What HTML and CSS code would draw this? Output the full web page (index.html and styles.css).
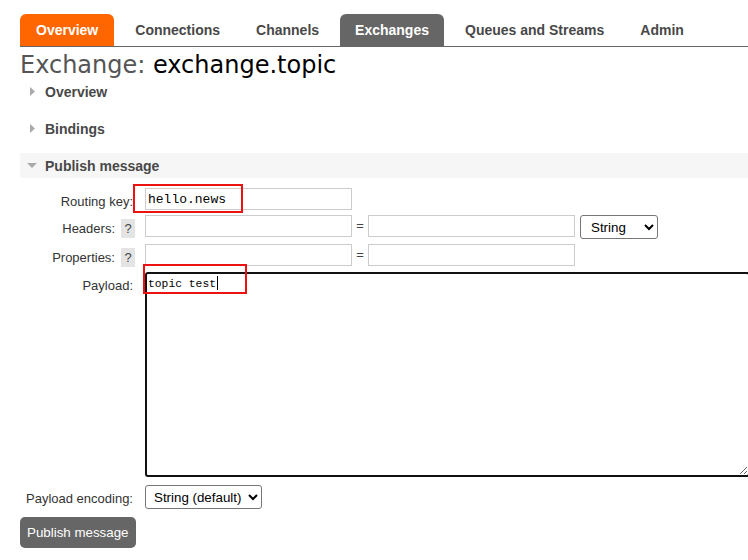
FILE: index.html
```html
<!DOCTYPE html>
<html lang="en">
<head>
<meta charset="utf-8">
<title>Exchange: exchange.topic</title>
<link rel="stylesheet" href="styles.css">
</head>
<body>
<div class="page">
  <nav class="tabs">
    <a class="tab tab-home">Overview</a>
    <a class="tab">Connections</a>
    <a class="tab">Channels</a>
    <a class="tab tab-current">Exchanges</a>
    <a class="tab">Queues and Streams</a>
    <a class="tab">Admin</a>
  </nav>

  <h1 class="title"><span class="title-kind">Exchange:</span> exchange.topic</h1>

  <div class="section">
    <span class="section-icon"><svg width="5" height="9" viewBox="0 0 5 9"><polygon points="0,0 5,4.5 0,9" fill="#aaa"/></svg></span>
    <span>Overview</span>
  </div>
  <div class="section">
    <span class="section-icon"><svg width="5" height="9" viewBox="0 0 5 9"><polygon points="0,0 5,4.5 0,9" fill="#aaa"/></svg></span>
    <span>Bindings</span>
  </div>
  <div class="section section-open">
    <span class="section-icon"><svg width="10" height="5" viewBox="0 0 10 5"><polygon points="0,0 10,0 5,5" fill="#aaa"/></svg></span>
    <span>Publish message</span>
  </div>

  <form class="publish">
    <div class="label"><span class="label-text">Routing key:</span></div>
    <div class="field">
      <div class="mark-wrap">
        <input class="text-input" type="text" value="hello.news">
        <span class="mark mark-key"></span>
      </div>
    </div>

    <div class="label"><span class="label-text">Headers:</span><span class="help">?</span></div>
    <div class="field">
      <input class="text-input" type="text">
      <span class="eq">=</span>
      <input class="text-input" type="text">
      <select class="select select-type"><option>String</option></select>
    </div>

    <div class="label"><span class="label-text">Properties:</span><span class="help">?</span></div>
    <div class="field">
      <input class="text-input" type="text">
      <span class="eq">=</span>
      <input class="text-input" type="text">
    </div>

    <div class="label"><span class="label-text">Payload:</span></div>
    <div class="field">
      <div class="mark-wrap">
        <textarea class="payload">topic test</textarea>
        <span class="caret"></span>
        <span class="mark mark-payload"></span>
      </div>
    </div>

    <div class="label label-enc"><span class="label-text">Payload encoding:</span></div>
    <div class="field field-enc">
      <select class="select select-enc"><option>String (default)</option></select>
    </div>
  </form>

  <div class="actions">
    <button class="btn" type="button">Publish message</button>
  </div>
</div>
</body>
</html>
```

FILE: styles.css
```css
html, body {
  margin: 0;
  padding: 0;
  overflow: hidden;
  background: #fff;
}

body {
  font-family: "Liberation Sans", Arial, sans-serif;
  font-size: 13px;
  color: #484848;
}

.page {
  padding-left: 20px;
}

/* Tabs */
.tabs {
  display: flex;
  gap: 6px;
  margin-top: 14px;
  border-bottom: 1px solid #666;
}

.tab {
  display: block;
  height: 32px;
  line-height: 32px;
  padding: 0 15px;
  font-size: 14px;
  font-weight: bold;
  color: #484848;
  border-radius: 6px 6px 0 0;
  text-decoration: none;
}

.tab-home {
  background: #f60;
  color: #fff;
  padding: 0 16px;
}

.tab-current {
  background: #666;
  color: #fff;
}

/* Title */
.title {
  margin: 4px 0 0;
  font-family: "DejaVu Sans", Verdana, sans-serif;
  font-size: 24px;
  font-weight: normal;
  line-height: 28px;
  color: #000;
}

.title-kind {
  color: #555;
}

/* Section headings */
.section {
  display: flex;
  align-items: center;
  height: 25px;
  margin-top: 12px;
  padding-left: 5px;
  font-size: 14px;
  font-weight: bold;
  color: #484848;
}

.section:first-of-type {
  margin-top: 0;
}

.section-icon {
  display: flex;
  justify-content: center;
  align-items: center;
  width: 14px;
  margin-right: 6px;
}

.section-icon svg {
  display: block;
}

.section-open {
  background: #f6f6f6;
}

/* Form */
.publish {
  display: grid;
  grid-template-columns: 115px auto;
  column-gap: 10px;
  row-gap: 5px;
  margin: 10px 0 0;
}

.label {
  display: flex;
  justify-content: flex-end;
  align-items: flex-start;
  gap: 6px;
  padding-right: 2px;
}

.label-text {
  padding-top: 6px;
  line-height: 15px;
  font-size: 13px;
  color: #333;
  white-space: nowrap;
}

.label-enc,
.field-enc {
  margin-top: 3px;
}

.help {
  width: 14px;
  height: 19px;
  margin-top: 4px;
  margin-right: -2px;
  line-height: 19px;
  text-align: center;
  background: #e4e4e4;
  color: #444;
  font-size: 13px;
}

.field {
  display: flex;
  align-items: flex-start;
}

.text-input {
  box-sizing: border-box;
  width: 207px;
  height: 22px;
  margin: 0;
  padding: 0 2px;
  border: 1px solid #ccc;
  border-radius: 0;
  background: #fff;
  font-family: "Liberation Mono", "Courier New", monospace;
  font-size: 13px;
  color: #000;
  outline: none;
}

.eq {
  width: 16px;
  line-height: 22px;
  text-align: center;
  color: #444;
  font-size: 13px;
}

.select {
  box-sizing: border-box;
  height: 24px;
  margin: 0;
  padding-left: 6px;
  border: 1px solid #767676;
  border-radius: 3px;
  background: #fff;
  color: #000;
  font-family: "Liberation Sans", Arial, sans-serif;
  font-size: 13.33px;
}

.select-type {
  width: 78px;
  margin-left: 5px;
}

.select-enc {
  width: 117px;
  padding-left: 4px;
}

.mark-wrap {
  position: relative;
}

.text-input,
.payload {
  display: block;
}

.payload {
  box-sizing: border-box;
  width: 605px;
  height: 205px;
  margin: 0;
  padding: 4px 1px;
  border: 2px solid #111;
  border-radius: 3px;
  background: #fff;
  color: #000;
  font-family: "Liberation Mono", "Courier New", monospace;
  font-size: 11.33px;
  outline: none;
}

.caret {
  position: absolute;
  left: 72px;
  top: 4px;
  width: 1px;
  height: 14px;
  background: #000;
}

/* red annotation boxes drawn over the fields */
.mark {
  position: absolute;
  box-sizing: border-box;
  border: 2px solid #ee1111;
  pointer-events: none;
}

.mark-key {
  left: -12px;
  top: -4px;
  width: 110px;
  height: 29px;
}

.mark-payload {
  left: -2px;
  top: -8px;
  width: 104px;
  height: 30px;
}

/* Button */
.actions {
  margin-top: 8px;
}

.btn {
  display: block;
  height: 31px;
  padding: 0 7px;
  border: 0;
  border-radius: 5px;
  background: #666;
  color: #fff;
  font-family: "Liberation Sans", Arial, sans-serif;
  font-size: 13.33px;
}
```
